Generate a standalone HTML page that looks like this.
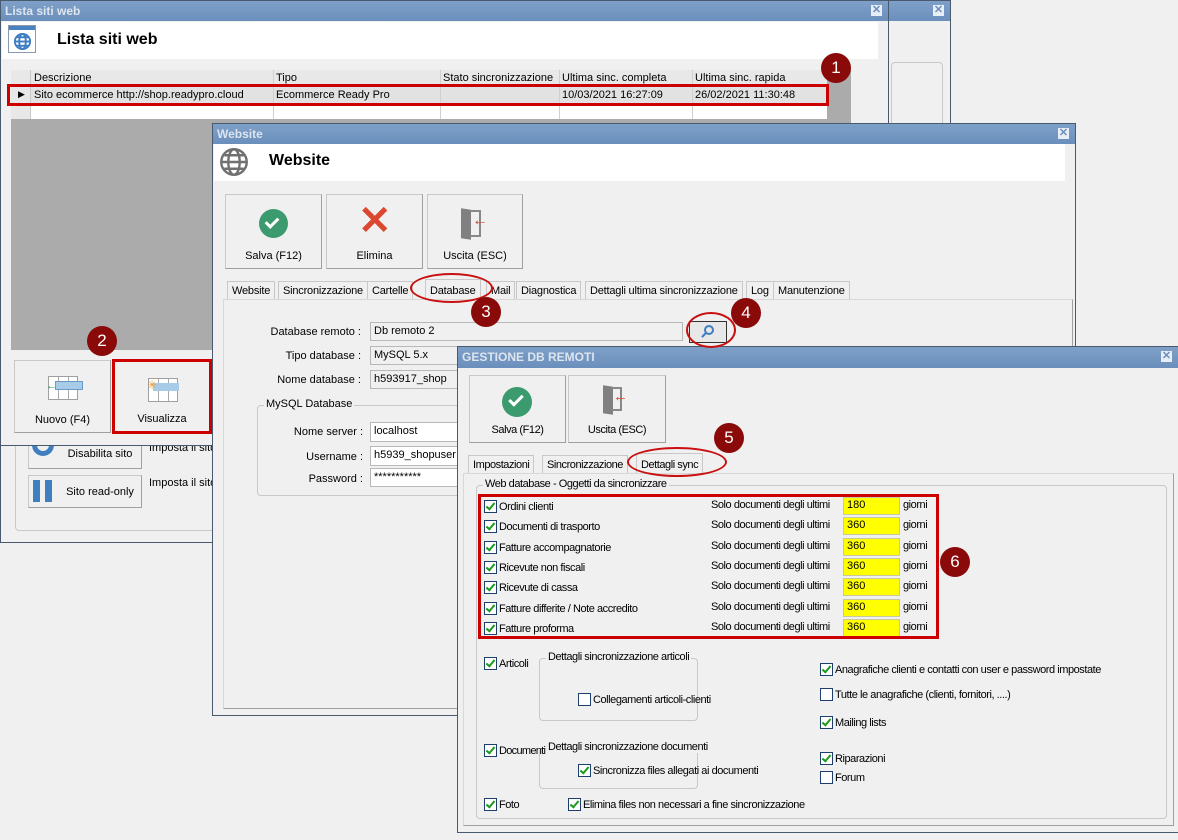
<!DOCTYPE html>
<html><head><meta charset="utf-8"><style>
*{box-sizing:border-box;margin:0;padding:0}
body{width:1178px;height:840px;background:#f0f0f0;position:relative;overflow:hidden;font-family:"Liberation Sans",sans-serif;font-size:11px;color:#000}
.a{position:absolute}
.win{position:absolute;background:#f0f0f0;border:1px solid #4a5a6e}
.tb{position:absolute;left:0;right:0;top:0;height:20px;background:linear-gradient(#7ea0c8,#6b8fbc);color:#dde5ef;font-weight:bold;font-size:12px;padding:3px 4px}
.x{position:absolute;right:6px;top:4px;width:11px;height:11px;background:#e8eef6;color:#6b8fbc;font-size:11px;line-height:11px;text-align:center;font-weight:bold}
.hdr{position:absolute;left:1px;right:10px;background:#fff}
.btn{position:absolute;background:#f0f0f0;border:1px solid #c8c8c8;border-right-color:#a0a0a0;border-bottom-color:#a0a0a0;text-align:center}
.btn span{position:absolute;left:0;right:0;bottom:6px;font-size:11px}
.badge{position:absolute;width:30px;height:30px;border-radius:50%;background:#8a0a0a;color:#fff;font-size:17px;text-align:center;line-height:30px}
.ell{position:absolute;border:2px solid #c81010;border-radius:50%}
.inp{position:absolute;background:#f0f0f0;border:1px solid #b8b8b8;padding:2px 3px;font-size:11px}
.inpw{position:absolute;background:#fff;border:1px solid #b8b8b8;padding:2px 3px;font-size:11px}
.lbl{position:absolute;text-align:right;font-size:11px}
.grp{position:absolute;border:1px solid #c8c8c8;border-radius:4px}
.grp>b{position:absolute;top:-8px;left:6px;background:#f0f0f0;font-weight:normal;padding:0 2px;font-size:11px;white-space:nowrap}
.cb{position:absolute;width:13px;height:13px;border:1px solid #1c3f6e;background:#fff}
.cb.c::after{content:"";position:absolute;left:3px;top:0px;width:3px;height:7px;border:solid #1a9a1a;border-width:0 2px 2px 0;transform:rotate(40deg)}
.t{position:absolute;font-size:11px;white-space:nowrap}
.g .t,.g .grp>b,.g .tab,.g .btn span{letter-spacing:-0.45px}
.y{position:absolute;background:#ffff00;border:1px solid #c8c8a0;width:57px;height:18px;padding:1px 3px;font-size:11px}
.tab{position:absolute;top:0;height:18px;border:1px solid #c8c8c8;border-bottom:none;padding:3px 4px;font-size:11px;background:#f0f0f0;white-space:nowrap}
.w .tab{letter-spacing:-0.2px}
</style></head><body>

<div class="win" style="left:0;top:0;width:951px;height:543px">
 <div class="tb"><div class="x">✕</div></div>
 <div class="grp" style="left:890px;top:61px;width:52px;height:480px"></div>
 <div class="grp" style="left:14px;top:300px;width:200px;height:230px"></div>
 <div class="btn" style="left:27px;top:440px;width:114px;height:28px"><div class="a" style="left:3px;top:0;width:22px;height:14px;border-radius:0 0 11px 11px;border:5px solid #3f7fc0;border-top:none"></div><span style="bottom:8px;left:30px">Disabilita sito</span></div>
 <div class="btn" style="left:27px;top:474px;width:114px;height:33px"><div class="a" style="left:4px;top:4px;width:7px;height:22px;background:#3f7fc0"></div><div class="a" style="left:16px;top:4px;width:7px;height:22px;background:#3f7fc0"></div><span style="bottom:9px;left:30px">Sito read-only</span></div>
 <div class="t" style="left:148px;top:441px">Imposta il sito</div>
 <div class="t" style="left:148px;top:476px">Imposta il sito</div>
</div>

<div class="win" style="left:0;top:0;width:889px;height:446px">
 <div class="tb">Lista siti web<div class="x">✕</div></div>
 <div class="hdr" style="top:21px;height:37px"></div>
 <div class="a" style="left:7px;top:24px;width:28px;height:28px;border:1px solid #8a9aae;background:#fff"><div style="height:4px;background:#4a82c0"></div>
  <svg class="a" style="left:4px;top:6px" width="19" height="19" viewBox="0 0 20 20" fill="none" stroke="#3d7ec2" stroke-width="2"><circle cx="10" cy="10" r="8"/><ellipse cx="10" cy="10" rx="3.5" ry="8"/><line x1="2" y1="10" x2="18" y2="10"/><line x1="4" y1="5.5" x2="16" y2="5.5"/><line x1="4" y1="14.5" x2="16" y2="14.5"/></svg></div>
 <div class="t" style="left:56px;top:30px;font-size:16px;font-weight:bold">Lista siti web</div>
 <div class="a" style="left:10px;top:69px;width:840px;height:280px;background:#ababab"></div>
 <div class="a" style="left:10px;top:69px;width:816px;height:49px;background:#fff"></div>
 <div class="a" style="left:10px;top:69px;width:816px;height:16px;background:#e8e8e8;border-bottom:1px solid #c8c8c8"></div>
 <div class="a" style="left:10px;top:85px;width:816px;height:18px;background:#e2e2e2;border-bottom:1px solid #d0d0d0"></div>
 <div class="a" style="left:10px;top:69px;width:20px;height:49px;background:#e8e8e8;border-right:1px solid #c8c8c8"></div>
 <div class="a" style="left:272px;top:69px;width:1px;height:49px;background:#d0d0d0"></div>
 <div class="a" style="left:439px;top:69px;width:1px;height:49px;background:#d0d0d0"></div>
 <div class="a" style="left:558px;top:69px;width:1px;height:49px;background:#d0d0d0"></div>
 <div class="a" style="left:691px;top:69px;width:1px;height:49px;background:#d0d0d0"></div>
 <div class="t" style="left:33px;top:71px">Descrizione</div><div class="t" style="left:275px;top:71px">Tipo</div><div class="t" style="left:442px;top:71px">Stato sincronizzazione</div><div class="t" style="left:561px;top:71px">Ultima sinc. completa</div><div class="t" style="left:694px;top:71px">Ultima sinc. rapida</div>
 <div class="t" style="left:17px;top:88px;font-size:9px">▶</div>
 <div class="t" style="left:33px;top:88px">Sito ecommerce http://shop.readypro.cloud</div><div class="t" style="left:275px;top:88px">Ecommerce Ready Pro</div><div class="t" style="left:561px;top:88px">10/03/2021 16:27:09</div><div class="t" style="left:694px;top:88px">26/02/2021 11:30:48</div>
 <div class="a" style="left:6px;top:83px;width:822px;height:22px;border:3px solid #cc0000"></div>
 <div class="btn" style="left:13px;top:359px;width:97px;height:73px"><div class="a" style="left:33px;top:15px;width:30px;height:24px;border:1px solid #a0a0a0;background:repeating-linear-gradient(90deg,#fff 0 9px,#aaa 9px 10px)"></div><div class="a" style="left:40px;top:20px;width:28px;height:9px;background:#a8cce8;border:1px solid #6a9ac8"></div><div class="a" style="left:31px;top:19px;color:#2a9a6a;font-size:11px">←</div><span>Nuovo (F4)</span></div>
 <div class="btn" style="left:111px;top:358px;width:100px;height:75px;border:3px solid #cc0000"><div class="a" style="left:33px;top:16px;width:30px;height:24px;border:1px solid #a0a0a0;background:repeating-linear-gradient(90deg,#fff 0 9px,#aaa 9px 10px)"></div><div class="a" style="left:38px;top:21px;width:26px;height:8px;background:#a8cce8"></div><div class="a" style="left:32px;top:16px;color:#f0a030;font-size:12px">✳</div><span>Visualizza</span></div>
</div>

<div class="win w" style="left:212px;top:123px;width:864px;height:593px">
 <div class="tb">Website<div class="x">✕</div></div>
 <div class="hdr" style="top:20px;height:37px"></div>
 <svg class="a" style="left:6px;top:23px" width="30" height="30" viewBox="0 0 20 20" fill="none" stroke="#707070" stroke-width="1.6"><circle cx="10" cy="10" r="8.5"/><ellipse cx="10" cy="10" rx="3.8" ry="8.5"/><line x1="1.5" y1="10" x2="18.5" y2="10"/><line x1="3.5" y1="5.5" x2="16.5" y2="5.5"/><line x1="3.5" y1="14.5" x2="16.5" y2="14.5"/></svg>
 <div class="t" style="left:56px;top:28px;font-size:16px;font-weight:bold">Website</div>
 <div class="btn" style="left:12px;top:70px;width:97px;height:75px"><div class="a" style="left:33px;top:14px;width:29px;height:29px;border-radius:50%;background:#3b9a6e"></div><div class="a" style="left:42px;top:20px;width:8px;height:13px;border:solid #fff;border-width:0 3px 3px 0;transform:rotate(45deg)"></div><span>Salva (F12)</span></div>
 <div class="btn" style="left:113px;top:70px;width:97px;height:75px"><div class="a" style="left:31px;top:6px;font-size:40px;color:#d9482f;font-weight:bold;line-height:40px">✕</div><span>Elimina</span></div>
 <div class="btn" style="left:214px;top:70px;width:96px;height:75px"><div class="a" style="left:33px;top:14px;width:10px;height:30px;background:#808080;transform:skewY(8deg)"></div><div class="a" style="left:42px;top:15px;width:11px;height:27px;border:2px solid #888;border-left:none"></div><div class="a" style="left:44px;top:17px;color:#d9482f;font-size:16px;font-weight:bold">←</div><span>Uscita (ESC)</span></div>
 <div class="a" style="left:10px;top:175px;width:850px;height:410px;border:1px solid #d8d8d8;border-right-color:#a0a0a0;border-bottom-color:#a0a0a0"></div>
 <div class="a" style="left:14px;top:157px;height:18px;width:660px">
  <div class="tab" style="left:0">Website</div><div class="tab" style="left:51px">Sincronizzazione</div><div class="tab" style="left:140px">Cartelle</div><div class="tab" style="left:198px;height:20px;top:-2px;padding-top:5px">Database</div><div class="tab" style="left:259px">Mail</div><div class="tab" style="left:289px">Diagnostica</div><div class="tab" style="left:358px">Dettagli ultima sincronizzazione</div><div class="tab" style="left:519px">Log</div><div class="tab" style="left:546px">Manutenzione</div>
 </div>
 <div class="lbl" style="left:20px;width:128px;top:202px">Database remoto :</div>
 <div class="lbl" style="left:20px;width:128px;top:226px">Tipo database :</div>
 <div class="lbl" style="left:20px;width:128px;top:250px">Nome database :</div>
 <div class="inp" style="left:157px;top:198px;width:313px;height:19px">Db remoto 2</div>
 <div class="inp" style="left:157px;top:222px;width:100px;height:19px">MySQL 5.x</div>
 <div class="inp" style="left:157px;top:246px;width:100px;height:19px">h593917_shop</div>
 <div class="a" style="left:476px;top:197px;width:38px;height:22px;background:#e8e8e8;border:1px solid #333"><div class="a" style="left:14px;top:3px;width:10px;height:10px;border:2px solid #3d7ec2;border-radius:50%"></div><div class="a" style="left:11px;top:12px;width:6px;height:2px;background:#3d7ec2;transform:rotate(-45deg)"></div></div>
 <div class="grp" style="left:44px;top:281px;width:220px;height:91px"><b>MySQL Database</b></div>
 <div class="lbl" style="left:60px;width:90px;top:302px">Nome server :</div>
 <div class="lbl" style="left:60px;width:90px;top:327px">Username :</div>
 <div class="lbl" style="left:60px;width:90px;top:349px">Password :</div>
 <div class="inpw" style="left:157px;top:298px;width:100px;height:20px">localhost</div>
 <div class="inpw" style="left:157px;top:322px;width:100px;height:20px">h5939_shopuser</div>
 <div class="inpw" style="left:157px;top:344px;width:100px;height:19px">***********</div>
</div>

<div class="win g" style="left:457px;top:346px;width:722px;height:487px">
 <div class="tb" style="height:21px;font-size:12px">GESTIONE DB REMOTI<div class="x">✕</div></div>
 <div class="btn" style="left:11px;top:28px;width:97px;height:68px"><div class="a" style="left:32px;top:11px;width:30px;height:30px;border-radius:50%;background:#3b9a6e"></div><div class="a" style="left:42px;top:16px;width:8px;height:14px;border:solid #fff;border-width:0 3px 3px 0;transform:rotate(45deg)"></div><span>Salva (F12)</span></div>
 <div class="btn" style="left:110px;top:28px;width:98px;height:68px"><div class="a" style="left:34px;top:10px;width:10px;height:28px;background:#808080;transform:skewY(8deg)"></div><div class="a" style="left:43px;top:11px;width:10px;height:24px;border:2px solid #888;border-left:none"></div><div class="a" style="left:44px;top:12px;color:#d9482f;font-size:15px;font-weight:bold">←</div><span>Uscita (ESC)</span></div>
 <div class="a" style="left:5px;top:126px;width:711px;height:353px;border:1px solid #d8d8d8;border-right-color:#a0a0a0;border-bottom-color:#a0a0a0"></div>
 <div class="a" style="left:10px;top:108px;width:260px;height:18px">
  <div class="tab" style="left:0">Impostazioni</div><div class="tab" style="left:74px">Sincronizzazione</div><div class="tab" style="left:168px;top:-2px;height:20px;padding-top:5px">Dettagli sync</div>
 </div>
 <div class="grp" style="left:18px;top:138px;width:691px;height:334px"><b>Web database - Oggetti da sincronizzare</b></div>
 <div class="cb c" style="left:26px;top:153px"></div><div class="t" style="left:41px;top:154px">Ordini clienti</div>
 <div class="cb c" style="left:26px;top:173px"></div><div class="t" style="left:41px;top:174px">Documenti di trasporto</div>
 <div class="cb c" style="left:26px;top:194px"></div><div class="t" style="left:41px;top:195px">Fatture accompagnatorie</div>
 <div class="cb c" style="left:26px;top:214px"></div><div class="t" style="left:41px;top:215px">Ricevute non fiscali</div>
 <div class="cb c" style="left:26px;top:234px"></div><div class="t" style="left:41px;top:235px">Ricevute di cassa</div>
 <div class="cb c" style="left:26px;top:255px"></div><div class="t" style="left:41px;top:256px">Fatture differite / Note accredito</div>
 <div class="cb c" style="left:26px;top:275px"></div><div class="t" style="left:41px;top:276px">Fatture proforma</div>
 <div class="t" style="left:253px;top:152px">Solo documenti degli ultimi</div><div class="y" style="left:385px;top:150px">180</div><div class="t" style="left:445px;top:152px">giorni</div>
 <div class="t" style="left:253px;top:172px">Solo documenti degli ultimi</div><div class="y" style="left:385px;top:170px">360</div><div class="t" style="left:445px;top:172px">giorni</div>
 <div class="t" style="left:253px;top:193px">Solo documenti degli ultimi</div><div class="y" style="left:385px;top:191px">360</div><div class="t" style="left:445px;top:193px">giorni</div>
 <div class="t" style="left:253px;top:213px">Solo documenti degli ultimi</div><div class="y" style="left:385px;top:211px">360</div><div class="t" style="left:445px;top:213px">giorni</div>
 <div class="t" style="left:253px;top:233px">Solo documenti degli ultimi</div><div class="y" style="left:385px;top:231px">360</div><div class="t" style="left:445px;top:233px">giorni</div>
 <div class="t" style="left:253px;top:254px">Solo documenti degli ultimi</div><div class="y" style="left:385px;top:252px">360</div><div class="t" style="left:445px;top:254px">giorni</div>
 <div class="t" style="left:253px;top:274px">Solo documenti degli ultimi</div><div class="y" style="left:385px;top:272px">360</div><div class="t" style="left:445px;top:274px">giorni</div>
 <div class="a" style="left:20px;top:147px;width:461px;height:145px;border:3px solid #cc0000"></div>

 <div class="grp" style="left:81px;top:311px;width:159px;height:63px"><b>Dettagli sincronizzazione articoli</b></div>
 <div class="grp" style="left:81px;top:401px;width:159px;height:41px"><b>Dettagli sincronizzazione documenti</b></div>
 <div class="cb c" style="left:26px;top:310px"></div><div class="t" style="left:41px;top:311px">Articoli</div>
 <div class="cb" style="left:120px;top:346px"></div><div class="t" style="left:135px;top:347px">Collegamenti articoli-clienti</div>
 <div class="cb c" style="left:362px;top:316px"></div><div class="t" style="left:377px;top:317px">Anagrafiche clienti e contatti con user e password impostate</div>
 <div class="cb" style="left:362px;top:341px"></div><div class="t" style="left:377px;top:342px">Tutte le anagrafiche (clienti, fornitori, ....)</div>
 <div class="cb c" style="left:362px;top:369px"></div><div class="t" style="left:377px;top:370px">Mailing lists</div>
 <div class="cb c" style="left:26px;top:397px"></div><div class="t" style="left:41px;top:398px;letter-spacing:-0.7px">Documenti</div>
 <div class="cb c" style="left:120px;top:417px"></div><div class="t" style="left:135px;top:418px">Sincronizza files allegati ai documenti</div>
 <div class="cb c" style="left:362px;top:405px"></div><div class="t" style="left:377px;top:406px">Riparazioni</div>
 <div class="cb" style="left:362px;top:424px"></div><div class="t" style="left:377px;top:425px">Forum</div>
 <div class="cb c" style="left:26px;top:451px"></div><div class="t" style="left:41px;top:452px">Foto</div>
 <div class="cb c" style="left:110px;top:451px"></div><div class="t" style="left:125px;top:452px">Elimina files non necessari a fine sincronizzazione</div>
</div>

<div class="ell" style="left:410px;top:273px;width:83px;height:30px"></div>
<div class="ell" style="left:686px;top:312px;width:50px;height:36px"></div>
<div class="ell" style="left:627px;top:447px;width:100px;height:30px"></div>
<div class="badge" style="left:821px;top:53px">1</div>
<div class="badge" style="left:87px;top:326px">2</div>
<div class="badge" style="left:471px;top:297px">3</div>
<div class="badge" style="left:731px;top:298px">4</div>
<div class="badge" style="left:714px;top:423px">5</div>
<div class="badge" style="left:940px;top:547px">6</div>
</body></html>
